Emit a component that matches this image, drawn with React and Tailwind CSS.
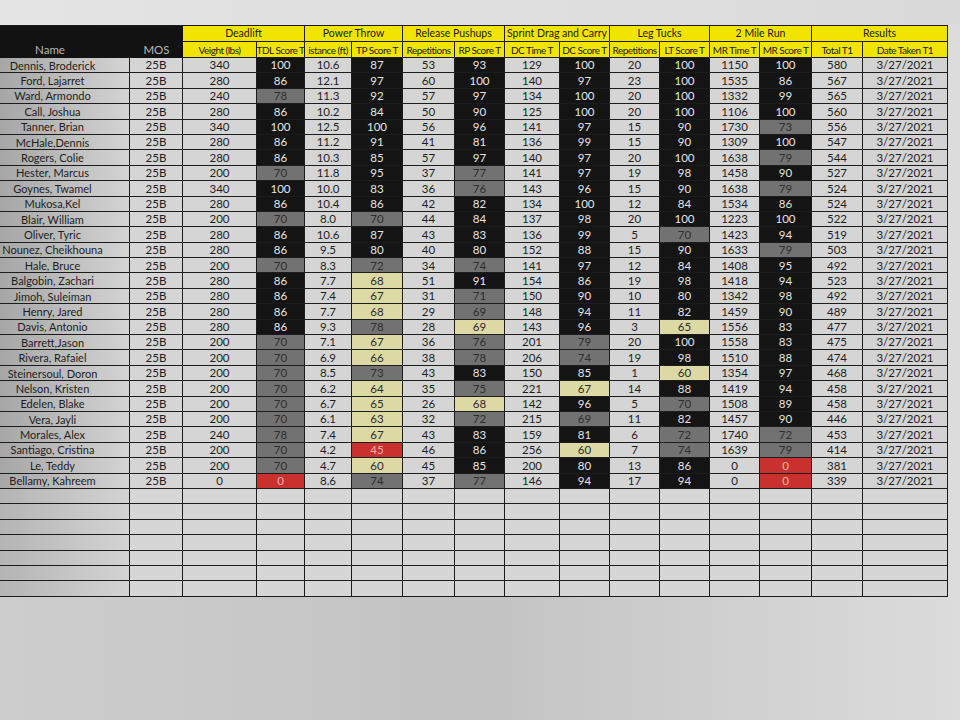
import React from "react";

// each row: name, then cells split by "|"; a trailing B/G/Y/R marks a shaded score cell
const rows = [
  ["Dennis, Broderick", "340|100B|10.6|87B|53|93B|129|100B|20|100B|1150|100B|580"],
  ["Ford, Lajarret", "280|86B|12.1|97B|60|100B|140|97B|23|100B|1535|86B|567"],
  ["Ward, Armondo", "240|78G|11.3|92B|57|97B|134|100B|20|100B|1332|99B|565"],
  ["Call, Joshua", "280|86B|10.2|84B|50|90B|125|100B|20|100B|1106|100B|560"],
  ["Tanner, Brian", "340|100B|12.5|100B|56|96B|141|97B|15|90B|1730|73G|556"],
  ["McHale,Dennis", "280|86B|11.2|91B|41|81B|136|99B|15|90B|1309|100B|547"],
  ["Rogers, Colie", "280|86B|10.3|85B|57|97B|140|97B|20|100B|1638|79G|544"],
  ["Hester, Marcus", "200|70G|11.8|95B|37|77G|141|97B|19|98B|1458|90B|527"],
  ["Goynes, Twamel", "340|100B|10.0|83B|36|76G|143|96B|15|90B|1638|79G|524"],
  ["Mukosa,Kel", "280|86B|10.4|86B|42|82B|134|100B|12|84B|1534|86B|524"],
  ["Blair, William", "200|70G|8.0|70G|44|84B|137|98B|20|100B|1223|100B|522"],
  ["Oliver, Tyric", "280|86B|10.6|87B|43|83B|136|99B|5|70G|1423|94B|519"],
  ["Nounez, Cheikhouna", "280|86B|9.5|80B|40|80B|152|88B|15|90B|1633|79G|503"],
  ["Hale, Bruce", "200|70G|8.3|72G|34|74G|141|97B|12|84B|1408|95B|492"],
  ["Balgobin, Zachari", "280|86B|7.7|68Y|51|91B|154|86B|19|98B|1418|94B|523"],
  ["Jimoh, Suleiman", "280|86B|7.4|67Y|31|71G|150|90B|10|80B|1342|98B|492"],
  ["Henry, Jared", "280|86B|7.7|68Y|29|69G|148|94B|11|82B|1459|90B|489"],
  ["Davis, Antonio", "280|86B|9.3|78G|28|69Y|143|96B|3|65Y|1556|83B|477"],
  ["Barrett,Jason", "200|70G|7.1|67Y|36|76G|201|79G|20|100B|1558|83B|475"],
  ["Rivera, Rafaiel", "200|70G|6.9|66Y|38|78G|206|74G|19|98B|1510|88B|474"],
  ["Steinersoul, Doron", "200|70G|8.5|73G|43|83B|150|85B|1|60Y|1354|97B|468"],
  ["Nelson, Kristen", "200|70G|6.2|64Y|35|75G|221|67Y|14|88B|1419|94B|458"],
  ["Edelen, Blake", "200|70G|6.7|65Y|26|68Y|142|96B|5|70G|1508|89B|458"],
  ["Vera, Jayli", "200|70G|6.1|63Y|32|72G|215|69G|11|82B|1457|90B|446"],
  ["Morales, Alex", "240|78G|7.4|67Y|43|83B|159|81B|6|72G|1740|72G|453"],
  ["Santiago, Cristina", "200|70G|4.2|45R|46|86B|256|60Y|7|74G|1639|79G|414"],
  ["Le, Teddy", "200|70G|4.7|60Y|45|85B|200|80B|13|86B|0|0R|381"],
  ["Bellamy, Kahreem", "0|0R|8.6|74G|37|77G|146|94B|17|94B|0|0R|339"],
];

const groups = [
  ["Deadlift", "col-span-2"],
  ["Power Throw", "col-span-2"],
  ["Release Pushups", "col-span-2"],
  ["Sprint Drag and Carry", "col-span-2"],
  ["Leg Tucks", "col-span-2"],
  ["2 Mile Run", "col-span-2"],
  ["Results", "col-span-2"],
];

// the printout clips the long labels, so only the visible part is shown
const subHeads = [
  "Veight (lbs)",
  "TDL Score T",
  "istance (ft)",
  "TP Score T",
  "Repetitions",
  "RP Score T",
  "DC Time T",
  "DC Score T",
  "Repetitions",
  "LT Score T",
  "MR Time T",
  "MR Score T",
  "Total T1",
  "Date Taken T1",
];

const shade = {
  B: "bg-[#141414] text-[#e4e4e4]",
  G: "bg-[#727272] text-[#2e2e2e]",
  Y: "bg-[#dcd9a4] text-[#2c2c2c]",
  R: "bg-[#c8312d] text-[#f4b4b0]",
};

const cols =
  "grid grid-cols-[130px_53px_74px_48px_47px_51px_52px_50px_55px_50px_50px_50px_50px_52px_51px_85px]";

const cellBase =
  "h-[15.4px] flex items-center justify-center overflow-hidden whitespace-nowrap border-r border-b border-[#1c1c1c]";

const headCell =
  "h-[16px] bg-[#f1e400] border-r border-b border-[#1c1c1c] flex items-center justify-center overflow-hidden whitespace-nowrap text-[#1a1a1a]";

function DataCell({ raw }) {
  const code = raw.slice(-1);
  if (shade[code]) {
    return <div className={`${cellBase} ${shade[code]}`}>{raw.slice(0, -1)}</div>;
  }
  return <div className={`${cellBase} bg-[#d5d5d5] text-[#1e1e1e]`}>{raw}</div>;
}

function App() {
  return (
    <div
      className="w-[960px] h-[720px] overflow-hidden bg-linear-to-r from-[#cdcdcd] via-[#c3c3c3] to-[#dcdcdc] text-[11.5px] leading-none"
      style={{ fontFamily: "Lato, 'Open Sans', sans-serif" }}
    >
      <div className="h-[25px] bg-linear-to-r from-[#e4e4e4] to-[#dadada]" />
      <div className="w-[948px] border-t border-[#1c1c1c]">
        {/* header */}
        <div className={cols}>
          <div className="row-span-2 col-span-2 bg-[#121212] flex items-end pb-[3px] text-[#b8b8b8] text-[11.5px]">
            <span className="w-[130px] pr-[30px] text-center">Name</span>
            <span className="w-[53px] text-center">MOS</span>
          </div>
          {groups.map(([label, span]) => (
            <div key={label} className={`${span} ${headCell} text-[10.5px]`}>
              {label}
            </div>
          ))}
          {subHeads.map((label, i) => (
            <div key={i} className={`${headCell} text-[10px] tracking-[-0.5px]`}>
              {label}
            </div>
          ))}
        </div>

        {/* data rows */}
        {rows.map(([name, cells]) => (
          <div key={name} className={cols}>
            <div
              className={`${cellBase} bg-linear-to-r from-[#a6a6a6] to-[#d4d4d4] text-[#1e1e1e] pr-[24px] text-[11px]`}
            >
              {name}
            </div>
            <div className={`${cellBase} bg-[#d5d5d5] text-[#1e1e1e]`}>25B</div>
            {cells.split("|").map((raw, i) => (
              <DataCell key={i} raw={raw} />
            ))}
            <div className={`${cellBase} bg-[#d3d3d3] text-[#1e1e1e]`}>3/27/2021</div>
          </div>
        ))}

        {/* empty rows */}
        {[0, 1, 2, 3, 4, 5, 6].map((r) => (
          <div key={r} className={cols}>
            <div className={`${cellBase} bg-linear-to-r from-[#b4b4b4] to-[#d4d4d4]`} />
            {Array.from({ length: 15 }).map((_, i) => (
              <div key={i} className={`${cellBase} bg-[#d6d6d6]`} />
            ))}
          </div>
        ))}
      </div>
    </div>
  );
}

export default App;
